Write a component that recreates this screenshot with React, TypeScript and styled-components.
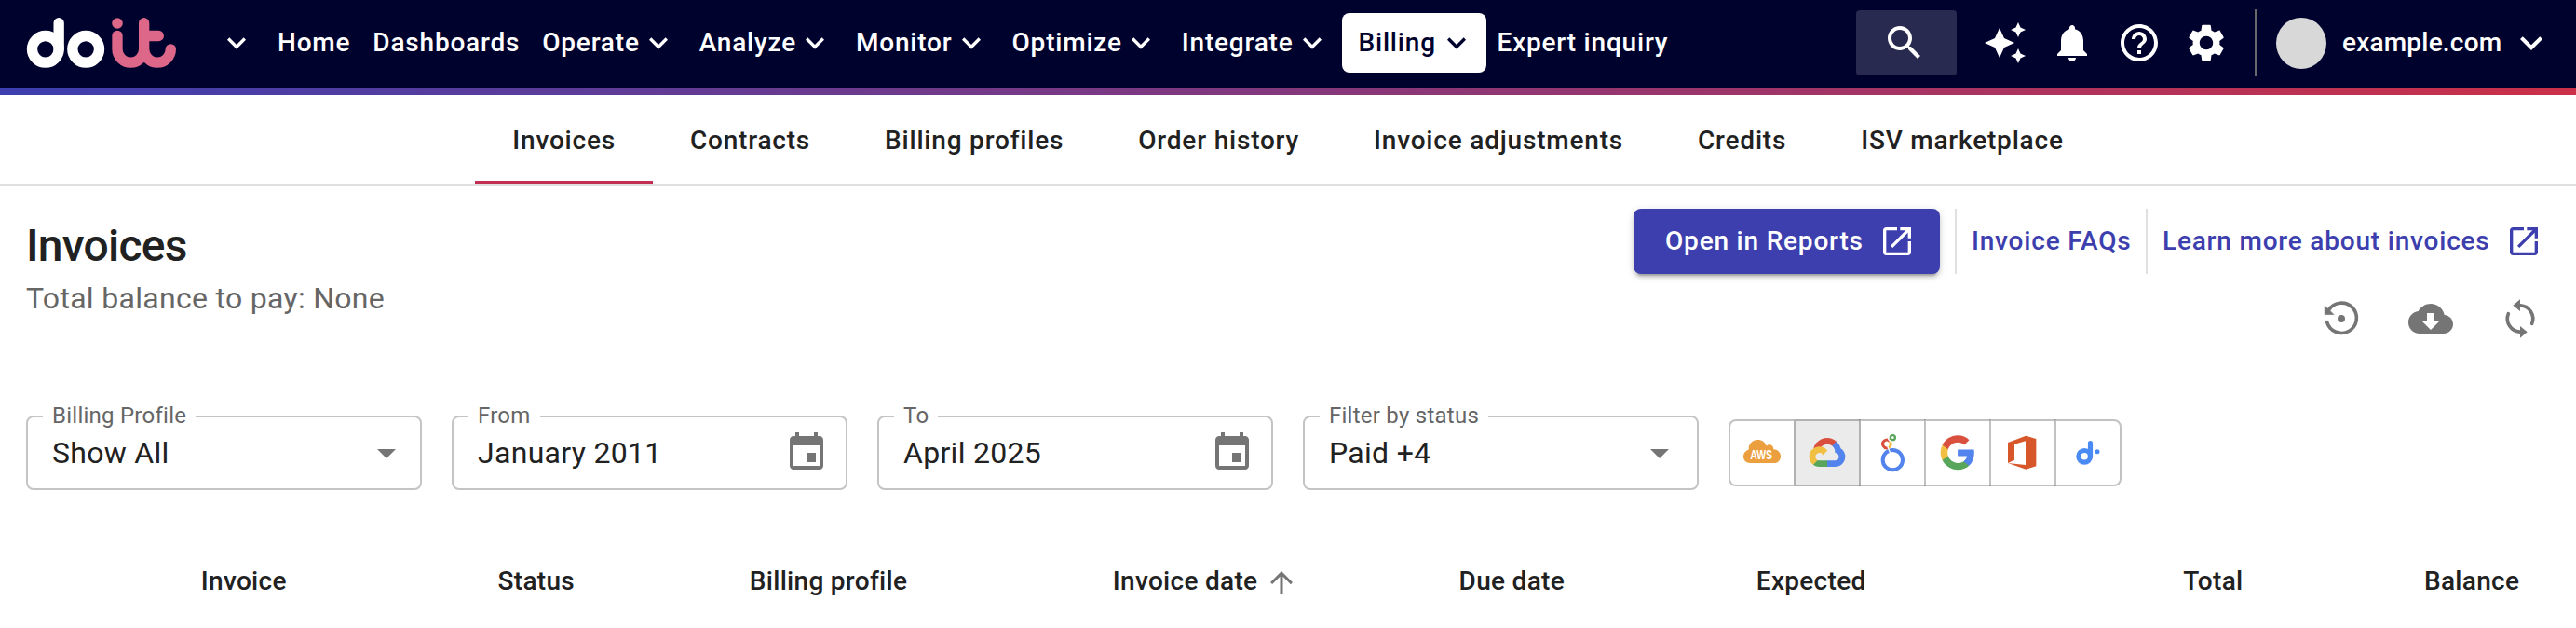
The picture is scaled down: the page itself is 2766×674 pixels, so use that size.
import React from 'react';
import styled, { createGlobalStyle, css } from 'styled-components';

const GlobalStyle = createGlobalStyle`
  * { box-sizing: border-box; }
  body {
    margin: 0;
    background: #fff;
    color: #212121;
    font-family: Roboto, 'Liberation Sans', sans-serif;
    font-size: 28px;
    overflow: hidden;
  }
  button { font: inherit; color: inherit; background: none; border: 0; padding: 0; margin: 0; }
  a { color: inherit; text-decoration: none; }
  svg { display: block; flex: none; }
`;

const Page = styled.div`
  width: 2766px;
  height: 674px;
  background: #fff;
`;

const Caption = styled.span<{ $lift?: number }>`
  padding-bottom: ${({ $lift = 1 }) => $lift}px;
  white-space: nowrap;
`;

/* ---------- Top bar ---------- */

const TopBar = styled.header`
  display: flex;
  align-items: center;
  height: 94px;
  padding: 0 24px 2px 20px;
  background: #00022e;
  color: #fff;
  font-weight: 500;
`;

const GradientLine = styled.div`
  height: 8px;
  background: linear-gradient(90deg, #3d3fb0, #cb3048);
`;

const WorkspaceToggle = styled.button`
  margin: 0 12.5px 0 33.5px;
`;

const Nav = styled.nav`
  display: flex;
  align-items: center;
  flex: 1;
`;

const NavItem = styled.button<{ $active?: boolean }>`
  display: flex;
  align-items: center;
  height: 64px;
  padding: 0 12px;
  border-radius: 8px;
  letter-spacing: 0.8px;
  ${({ $active }) =>
    $active &&
    css`
      width: 155px;
      padding: 0 12px 0 18px;
      background: #fff;
      color: #00022e;
      justify-content: space-between;
    `}
`;

const SearchButton = styled.button`
  display: flex;
  align-items: center;
  width: 108px;
  height: 70px;
  padding-left: 28px;
  border-radius: 4px;
  background: #292a50;
`;

const QuickActions = styled.div`
  display: flex;
  gap: 24px;
  margin: 0 28px;
`;

const Account = styled.div`
  display: flex;
  align-items: center;
  height: 72px;
  padding-left: 21px;
  border-left: 2px solid #696969;
`;

const Avatar = styled.span`
  width: 54px;
  height: 55px;
  margin-right: 17px;
  border-radius: 50%;
  background: #d8d8d8;
`;

const AccountName = styled(Caption)`
  width: 179px;
  letter-spacing: 0.2px;
`;

/* ---------- Tabs ---------- */

const Tabs = styled.nav`
  display: flex;
  justify-content: center;
  height: 98px;
  border-bottom: 2px solid #e0e0e0;
`;

const Tab = styled.a<{ $selected?: boolean }>`
  display: flex;
  align-items: center;
  padding: 0 40px;
  font-weight: 500;
  letter-spacing: 0.8px;
  white-space: nowrap;
  box-shadow: ${({ $selected }) => ($selected ? 'inset 0 -4px #c22f50' : 'none')};
`;

/* ---------- Page heading ---------- */

const Heading = styled.section`
  display: flex;
  justify-content: space-between;
  height: 246px;
  padding: 24px 36px 0 28px;
`;

const Title = styled.h1`
  margin: 11px 0 8px;
  font-size: 48px;
  line-height: 57px;
  font-weight: 500;
  letter-spacing: -0.75px;
`;

const Subtitle = styled.p`
  margin: 0;
  font-size: 32px;
  line-height: 40px;
  letter-spacing: 0.3px;
  color: #666;
`;

const HeadingActions = styled.div`
  display: flex;
  flex-direction: column;
  align-items: flex-end;
  gap: 24px;
`;

const LinkRow = styled.div`
  display: flex;
  height: 70px;
  font-weight: 500;
  letter-spacing: 0.8px;
  color: #3c3fad;
`;

const PrimaryButton = styled.button`
  display: flex;
  align-items: center;
  gap: 16px;
  width: 329px;
  padding-left: 34px;
  margin-right: 16px;
  border-radius: 8px;
  background: #3c3fad;
  color: #fff;
  letter-spacing: inherit;
  box-shadow: 0 6px 2px -4px rgba(0, 0, 0, 0.2), 0 4px 4px rgba(0, 0, 0, 0.14), 0 2px 10px rgba(0, 0, 0, 0.12);
`;

const TextLink = styled.a<{ $width: number }>`
  display: flex;
  align-items: center;
  justify-content: space-between;
  width: ${({ $width }) => $width}px;
  padding-left: 16px;
  border-left: 2px solid #e0e0e0;
`;

const IconRow = styled.div`
  display: flex;
  gap: 48px;
  color: #757575;
`;

/* ---------- Filters ---------- */

const Filters = styled.section`
  display: flex;
  align-items: center;
  gap: 32px;
  height: 80px;
  padding-left: 28px;
`;

const Field = styled.div<{ $end: number }>`
  position: relative;
  display: flex;
  align-items: center;
  justify-content: space-between;
  width: 425px;
  height: 80px;
  padding: 0 ${({ $end }) => $end}px 0 26px;
  border: 2px solid #c4c4c4;
  border-radius: 8px;
  font-size: 32px;
  letter-spacing: 0.3px;
  svg { color: #757575; }
`;

const FieldLabel = styled.label`
  position: absolute;
  top: -16px;
  left: 16px;
  padding: 0 10px;
  background: #fff;
  color: #666;
  font-size: 24px;
  line-height: 28px;
  letter-spacing: 0.25px;
`;

const ProviderGroup = styled.div`
  display: flex;
`;

const ProviderButton = styled.button<{ $selected?: boolean }>`
  width: 72px;
  height: 72px;
  border: 2px solid rgba(0, 0, 0, 0.24);
  background: ${({ $selected }) => ($selected ? '#ebebeb' : 'transparent')};
  &:not(:first-child) { margin-left: -2px; }
  &:not(:last-child) { border-right-color: transparent; }
  &:first-child { border-radius: 8px 0 0 8px; }
  &:last-child { border-radius: 0 8px 8px 0; }
`;

/* ---------- Table ---------- */

const TableHeader = styled.div`
  display: grid;
  grid-template-columns: 318.8px 270.2px 390px 371.8px 319.2px 458.6px 258.6px 1fr;
  align-items: center;
  height: 52px;
  margin-top: 73px;
  padding-left: 215.8px;
  font-weight: 500;
  letter-spacing: 0.3px;
`;

const ColumnTitle = styled.div`
  display: flex;
  align-items: center;
  gap: 8px;
  svg { color: #757575; }
`;

/* ---------- Icons ---------- */

const paths = {
  chevron: 'M7.41 8.59 12 13.17l4.59-4.58L18 10l-6 6-6-6z',
  search:
    'M15.5 14h-.79l-.28-.27C15.41 12.59 16 11.11 16 9.5 16 5.91 13.09 3 9.5 3S3 5.91 3 9.5 5.91 16 9.5 16c1.61 0 3.09-.59 4.23-1.57l.27.28v.79l5 4.99L20.49 19zm-6 0C7.01 14 5 11.99 5 9.5S7.01 5 9.5 5 14 7.01 14 9.5 11.99 14 9.5 14',
  sparkle:
    'M19 9l1.25-2.75L23 5l-2.75-1.25L19 1l-1.25 2.75L15 5l2.75 1.25zM19 15l-1.25 2.75L15 19l2.75 1.25L19 23l1.25-2.75L23 19l-2.75-1.25zM11.5 9.5L9 4 6.5 9.5 1 12l5.5 2.5L9 20l2.5-5.5L17 12z',
  bell:
    'M12 22c1.1 0 2-.9 2-2h-4c0 1.1.89 2 2 2m6-6v-5c0-3.07-1.64-5.64-4.5-6.32V4c0-.83-.67-1.5-1.5-1.5s-1.5.67-1.5 1.5v.68C7.63 5.36 6 7.92 6 11v5l-2 2v1h16v-1z',
  help:
    'M11 18h2v-2h-2zm1-16C6.48 2 2 6.48 2 12s4.48 10 10 10 10-4.48 10-10S17.52 2 12 2m0 18c-4.41 0-8-3.59-8-8s3.59-8 8-8 8 3.59 8 8-3.59 8-8 8m0-14c-2.21 0-4 1.79-4 4h2c0-1.1.9-2 2-2s2 .9 2 2c0 2-3 1.75-3 5h2c0-2.25 3-2.5 3-5 0-2.21-1.79-4-4-4',
  gear:
    'M19.14 12.94c.04-.3.06-.61.06-.94 0-.32-.02-.64-.07-.94l2.03-1.58c.18-.14.23-.41.12-.61l-1.92-3.32c-.12-.22-.37-.29-.59-.22l-2.39.96c-.5-.38-1.03-.7-1.62-.94l-.36-2.54c-.04-.24-.24-.41-.48-.41h-3.84c-.24 0-.43.17-.47.41l-.36 2.54c-.59.24-1.13.57-1.62.94l-2.39-.96c-.22-.08-.47 0-.59.22L2.74 8.87c-.12.21-.08.47.12.61l2.03 1.58c-.05.3-.09.63-.09.94s.02.64.07.94l-2.03 1.58c-.18.14-.23.41-.12.61l1.92 3.32c.12.22.37.29.59.22l2.39-.96c.5.38 1.03.7 1.62.94l.36 2.54c.05.24.24.41.48.41h3.84c.24 0 .44-.17.47-.41l.36-2.54c.59-.24 1.13-.56 1.62-.94l2.39.96c.22.08.47 0 .59-.22l1.92-3.32c.12-.22.07-.47-.12-.61zM12 15.6c-1.98 0-3.6-1.62-3.6-3.6s1.62-3.6 3.6-3.6 3.6 1.62 3.6 3.6-1.62 3.6-3.6 3.6',
  open:
    'M19 19H5V5h7V3H5c-1.11 0-2 .9-2 2v14c0 1.1.89 2 2 2h14c1.1 0 2-.9 2-2v-7h-2zM14 3v2h3.59l-9.83 9.83 1.41 1.41L19 6.41V10h2V3z',
  cloud:
    'M19.35 10.04C18.67 6.59 15.64 4 12 4 9.11 4 6.6 5.64 5.35 8.04 2.34 8.36 0 10.91 0 14c0 3.31 2.69 6 6 6h13c2.76 0 5-2.24 5-5 0-2.64-2.05-4.78-4.65-4.96M17 13l-5 5-5-5h3V9h4v4z',
  drop: 'M7 10l5 5 5-5z',
  event:
    'M17 12h-5v5h5zM16 1v2H8V1H6v2H5c-1.11 0-1.99.9-1.99 2L3 19c0 1.1.89 2 2 2h14c1.1 0 2-.9 2-2V5c0-1.1-.9-2-2-2h-1V1zm3 18H5V8h14z',
  up: 'M4 12l1.41 1.41L11 7.83V20h2V7.83l5.58 5.59L20 12l-8-8z',
};

const Icon = ({ name, size = 48 }: { name: keyof typeof paths; size?: number }) => (
  <svg width={size} height={size} viewBox="0 0 24 24" fill="currentColor" aria-hidden>
    <path d={paths[name]} />
  </svg>
);

const HistoryIcon = () => (
  <svg width="48" height="48" viewBox="30 24 144 144" aria-hidden>
    <path d="M56 107A48.500 48.500 0 1 0 61 69" fill="none" stroke="currentColor" strokeWidth="11" strokeLinecap="round" />
    <path d="M48 53V83H79Z" fill="currentColor" stroke="currentColor" strokeWidth="1" />
    <circle cx="102" cy="96" r="12" fill="currentColor" />
  </svg>
);

const RefreshIcon = () => (
  <svg width="48" height="48" viewBox="606 24 144 144" aria-hidden>
    <path
      d="M679 53.500A42.500 42.500 0 0 1 716 112M677 138.500A42.500 42.500 0 0 1 640 80"
      fill="none"
      stroke="currentColor"
      strokeWidth="11"
      strokeLinecap="round"
    />
    <path d="M655 53 678 34V72ZM701 139 678 120V158Z" fill="currentColor" />
  </svg>
);

const Logo = () => (
  <svg width="180" height="76" viewBox="0 -6 540 228" aria-label="doit" fill="none" strokeWidth="34" strokeLinecap="round">
    <g stroke="#fff">
      <circle cx="86.500" cy="128.500" r="43" />
      <circle cx="216.500" cy="128.500" r="43" />
      <path d="M129.500 44V128.500" />
    </g>
    <g stroke="#dc6788">
      <path d="M318 85V128.500A43 43 0 0 0 404 128.500V44M404 128.500A43 43 0 0 0 490 128.500M404 85.500H451" />
      <circle cx="318" cy="45" r="17.500" fill="#dc6788" stroke="none" />
    </g>
  </svg>
);

const ProviderSvg = ({ x, children }: { x: number; children: React.ReactNode }) => (
  <svg width="68" height="68" viewBox={`${x} 66 204 204`} aria-hidden>
    {children}
  </svg>
);

const Aws = () => (
  <ProviderSvg x={54}>
    <path
      fill="#ec9f3e"
      d="M117 201C105 201 96 192 96 180C96 169 103 160 113 158C112 139 125 126 142 126C156 126 166 134 170 146C179 137 193 143 193 157C206 157 216 167 216 179C216 192 207 201 195 201Z"
    />
    <text x="118" y="189" fill="#fff" fontFamily="Liberation Sans, sans-serif" fontWeight="700" fontSize="42" textLength="71" lengthAdjust="spacingAndGlyphs">
      AWS
    </text>
  </ProviderSvg>
);

const GoogleCloud = () => (
  <ProviderSvg x={264}>
    <g transform="translate(308 120) scale(0.453)">
      <path fill="#d9503f" d="M170.252 56.819l22.253-22.253 1.483-9.37C153.437-11.677 88.976-7.496 52.42 33.92 42.267 45.423 34.734 59.764 30.717 74.573l7.97-1.123 44.505-7.34 3.436-3.513c19.797-21.742 53.27-24.667 76.128-6.168l7.496.39z" />
      <path fill="#5383ec" d="M224.205 73.918a100.249 100.249 0 0 0-30.217-48.722l-31.232 31.232a55.515 55.515 0 0 1 20.379 44.037v5.544c15.35 0 27.797 12.446 27.797 27.796 0 15.352-12.446 27.485-27.797 27.485h-55.671l-5.466 5.934v33.34l5.466 5.231h55.67c39.93.311 72.553-31.494 72.864-71.424a72.303 72.303 0 0 0-31.793-60.453" />
      <path fill="#58a55c" d="M71.87 205.796h55.593V161.29H71.87a27.275 27.275 0 0 1-11.4-2.498l-7.887 2.42-22.409 22.253-1.952 7.574c12.567 9.489 27.9 14.825 43.647 14.757" />
      <path fill="#f1bf42" d="M71.87 61.425C31.94 61.664-.237 94.228.001 134.158a72.301 72.301 0 0 0 28.222 56.88l32.248-32.246c-13.99-6.322-20.208-22.786-13.887-36.776 6.32-13.99 22.786-20.208 36.775-13.888a27.796 27.796 0 0 1 13.887 13.888l32.248-32.248A72.224 72.224 0 0 0 71.87 61.425" />
    </g>
  </ProviderSvg>
);

const Looker = () => (
  <ProviderSvg x={474}>
    <g fill="none">
      <circle cx="577" cy="191" r="32" stroke="#5383ec" strokeWidth="12" />
      <path d="M563 151.500A13 13 0 1 1 566.500 130" stroke="#d9503f" strokeWidth="9" />
      <path d="M567.500 131A13 13 0 0 1 563 151.500" stroke="#f1bf42" strokeWidth="9" />
      <circle cx="577" cy="119" r="7.500" stroke="#58a55c" strokeWidth="7" />
      <path d="M560 147 569 169M562 124 571 131" stroke="#fff" strokeWidth="4" />
    </g>
  </ProviderSvg>
);

const Google = () => (
  <ProviderSvg x={684}>
    <g transform="translate(726 107) scale(5.03)">
      <path fill="#5383ec" d="M22.56 12.25c0-.78-.07-1.53-.2-2.25H12v4.26h5.92c-.26 1.37-1.04 2.53-2.21 3.31v2.77h3.57c2.08-1.92 3.28-4.74 3.28-8.09z" />
      <path fill="#58a55c" d="M12 23c2.97 0 5.46-.98 7.28-2.66l-3.57-2.77c-.98.66-2.23 1.06-3.71 1.06-2.86 0-5.29-1.93-6.16-4.53H2.18v2.84C3.99 20.53 7.7 23 12 23z" />
      <path fill="#f1bf42" d="M5.84 14.09c-.22-.66-.35-1.36-.35-2.09s.13-1.43.35-2.09V7.07H2.18C1.43 8.55 1 10.22 1 12s.43 3.45 1.18 4.93l2.85-2.22.81-.62z" />
      <path fill="#d9503f" d="M12 5.38c1.62 0 3.06.56 4.21 1.64l3.15-3.15C17.45 2.09 14.97 1 12 1 7.7 1 3.99 3.47 2.18 7.07l3.66 2.84c.87-2.6 3.3-4.53 6.16-4.53z" />
    </g>
  </ProviderSvg>
);

const Office = () => (
  <ProviderSvg x={894}>
    <path fill="#d7572b" d="M948 135 1006 113 1039 123V211L1006 221 948 201 1005 207V130L969 140V191L948 201Z" />
  </ProviderSvg>
);

const DoitMark = () => (
  <ProviderSvg x={1104}>
    <g fill="none" stroke="#4a8af4" strokeWidth="15.500" strokeLinecap="round">
      <circle cx="1194.500" cy="179.500" r="19" />
      <path d="M1213.500 136.500V179" />
    </g>
    <circle cx="1236" cy="164" r="7.500" fill="#4a8af4" />
  </ProviderSvg>
);

/* ---------- Data ---------- */

const navItems = [
  { label: 'Home' },
  { label: 'Dashboards' },
  { label: 'Operate', menu: true },
  { label: 'Analyze', menu: true },
  { label: 'Monitor', menu: true },
  { label: 'Optimize', menu: true },
  { label: 'Integrate', menu: true },
  { label: 'Billing', menu: true, active: true },
  { label: 'Expert inquiry' },
];

const tabs = ['Invoices', 'Contracts', 'Billing profiles', 'Order history', 'Invoice adjustments', 'Credits', 'ISV marketplace'];

const fields = [
  { label: 'Billing Profile', value: 'Show All', icon: 'drop', end: 12 },
  { label: 'From', value: 'January 2011', icon: 'event', end: 18 },
  { label: 'To', value: 'April 2025', icon: 'event', end: 18 },
  { label: 'Filter by status', value: 'Paid +4', icon: 'drop', end: 16 },
] as const;

const providers = [
  { name: 'AWS', Mark: Aws },
  { name: 'Google Cloud', Mark: GoogleCloud, selected: true },
  { name: 'Looker', Mark: Looker },
  { name: 'Google Workspace', Mark: Google },
  { name: 'Office 365', Mark: Office },
  { name: 'DoiT', Mark: DoitMark },
];

const columns = ['Invoice', 'Status', 'Billing profile', 'Invoice date', 'Due date', 'Expected', 'Total', 'Balance'];

export default function App() {
  return (
    <Page>
      <GlobalStyle />
      <TopBar>
        <Logo />
        <WorkspaceToggle>
          <Icon name="chevron" size={40} />
        </WorkspaceToggle>
        <Nav>
          {navItems.map(({ label, menu, active }) => (
            <NavItem key={label} $active={active}>
              <Caption>{label}</Caption>
              {menu && <Icon name="chevron" size={40} />}
            </NavItem>
          ))}
        </Nav>
        <SearchButton>
          <Icon name="search" />
        </SearchButton>
        <QuickActions>
          <Icon name="sparkle" />
          <Icon name="bell" />
          <Icon name="help" />
          <Icon name="gear" />
        </QuickActions>
        <Account>
          <Avatar />
          <AccountName>example.com</AccountName>
          <Icon name="chevron" />
        </Account>
      </TopBar>
      <GradientLine />
      <Tabs>
        {tabs.map((label, i) => (
          <Tab key={label} $selected={i === 0}>
            {label}
          </Tab>
        ))}
      </Tabs>
      <Heading>
        <div>
          <Title>Invoices</Title>
          <Subtitle>Total balance to pay: None</Subtitle>
        </div>
        <HeadingActions>
          <LinkRow>
            <PrimaryButton>
              <Caption>Open in Reports</Caption>
              <Icon name="open" size={40} />
            </PrimaryButton>
            <TextLink $width={205}>
              <Caption>Invoice FAQs</Caption>
            </TextLink>
            <TextLink $width={426}>
              <Caption>Learn more about invoices</Caption>
              <Icon name="open" size={40} />
            </TextLink>
          </LinkRow>
          <IconRow>
            <HistoryIcon />
            <Icon name="cloud" />
            <RefreshIcon />
          </IconRow>
        </HeadingActions>
      </Heading>
      <Filters>
        {fields.map(({ label, value, icon, end }) => (
          <Field key={label} $end={end}>
            <FieldLabel>{label}</FieldLabel>
            {value}
            <Icon name={icon} />
          </Field>
        ))}
        <ProviderGroup>
          {providers.map(({ name, Mark, selected }) => (
            <ProviderButton key={name} $selected={selected} aria-label={name}>
              <Mark />
            </ProviderButton>
          ))}
        </ProviderGroup>
      </Filters>
      <TableHeader>
        {columns.map((label) => (
          <ColumnTitle key={label}>
            <Caption $lift={3}>{label}</Caption>
            {label === 'Invoice date' && <Icon name="up" size={36} />}
          </ColumnTitle>
        ))}
      </TableHeader>
    </Page>
  );
}
